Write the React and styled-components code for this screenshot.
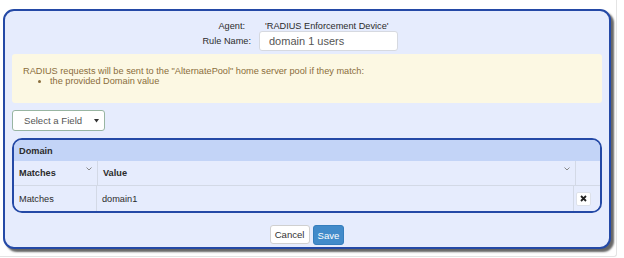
import React from "react";
import styled, { createGlobalStyle } from "styled-components";

const Global = createGlobalStyle`
  html, body { margin: 0; padding: 0; background: #fff; }
  body { font-family: "Liberation Sans", Arial, sans-serif; color: #2b2b2b; }
  * { box-sizing: border-box; }
`;

const Frame = styled.div`
  width: 617px;
  height: 257px;
  border-right: 1px solid #e4e4e4;
  border-bottom: 1px solid #e4e4e4;
  border-bottom-right-radius: 3px;
  padding: 9px 0 0 3px;
`;

const Panel = styled.div`
  width: 608px;
  height: 240px;
  border: 2px solid #2449a6;
  border-radius: 11px;
  background: #e6ecfd;
  box-shadow: 3px 3px 2px rgba(0, 0, 0, 0.6);
  padding: 9px 7px 0 7px;
  display: flex;
  flex-direction: column;
`;

const InfoRow = styled.div`
  display: flex;
  align-items: center;
  height: ${(p) => p.$h}px;
  font-size: 9.2px;
`;

const Label = styled.div`
  width: 239px;
  text-align: right;
  padding-right: ${(p) => p.$pr || 0}px;
`;

const Value = styled.div`
  margin-left: ${(p) => p.$ml}px;
`;

const TextInput = styled.div`
  width: 139px;
  height: 20px;
  background: #fff;
  border: 1px solid #d6d9e0;
  border-radius: 3px;
  font-size: 11px;
  color: #555;
  padding-left: 9px;
  display: flex;
  align-items: center;
`;

const Alert = styled.div`
  margin-top: 3px;
  background: #fcf8e3;
  border-radius: 3px;
  color: #8a6d3b;
  font-size: 9.2px;
  line-height: 10px;
  padding: 12px 11px 17px 11px;
  height: 49px;
`;

const List = styled.ul`
  margin: 0;
  padding-left: 27px;
  list-style: disc;
`;

const SelectButton = styled.div`
  margin-top: 7px;
  width: 93px;
  height: 21px;
  background: #fff;
  border: 1px solid #98b5a2;
  border-radius: 3px;
  font-size: 9.6px;
  color: #555;
  display: flex;
  align-items: center;
  justify-content: space-between;
  padding: 0 5px 0 11px;
`;

const Table = styled.div`
  margin-top: 7px;
  width: 590px;
  border: 2px solid #2449a6;
  border-radius: 10px;
  overflow: hidden;
  font-size: 9.2px;
`;

const TableTitle = styled.div`
  height: 21px;
  background: #c3d4f7;
  font-weight: bold;
  padding-left: 5px;
  display: flex;
  align-items: center;
`;

const Row = styled.div`
  display: grid;
  grid-template-columns: ${(p) => p.$cols};
  height: ${(p) => p.$h}px;
  border-top: ${(p) => (p.$sep ? "1px solid #d3d9e6" : "none")};
  background: #e6ecfd;
`;

const Cell = styled.div`
  display: flex;
  align-items: ${(p) => (p.$top ? "flex-start" : "center")};
  justify-content: space-between;
  padding-left: 5px;
  font-weight: ${(p) => (p.$bold ? "bold" : "normal")};
  border-left: ${(p) => (p.$line ? "1px solid #d3d9e6" : "none")};
`;

const HeadText = styled.span`
  align-self: center;
`;

const Chevron = styled.svg`
  align-self: flex-start;
  margin-top: 6px;
  margin-right: 5px;
`;

const DelButton = styled.div`
  width: 15px;
  height: 14px;
  margin-left: -3px;
  background: #fff;
  border: 1px solid #dde1ea;
  border-radius: 2px;
  display: flex;
  align-items: center;
  justify-content: center;
`;

const Actions = styled.div`
  margin-top: 12px;
  display: flex;
  justify-content: center;
  gap: 3px;
  font-size: 9.6px;
`;

const Button = styled.div`
  height: ${(p) => (p.$primary ? 20 : 19)}px;
  padding: 0 4px;
  border-radius: 3px;
  border: 1px solid ${(p) => (p.$primary ? "#357ebd" : "#d0d0d0")};
  background: ${(p) => (p.$primary ? "#428bca" : "#fff")};
  color: ${(p) => (p.$primary ? "#fff" : "#333")};
  display: flex;
  align-items: center;
`;

const ChevronIcon = () => (
  <Chevron width="6" height="4" viewBox="0 0 6 4">
    <polyline points="0.5,0.5 3,3 5.5,0.5" fill="none" stroke="#888" strokeWidth="1" />
  </Chevron>
);

export default function App() {
  return (
    <>
      <Global />
      <Frame>
        <Panel>
          <InfoRow $h={11}>
            <Label $pr={6}>Agent:</Label>
            <Value $ml={14}>'RADIUS Enforcement Device'</Value>
          </InfoRow>
          <InfoRow $h={20}>
            <Label>Rule Name:</Label>
            <Value $ml={8}>
              <TextInput>domain 1 users</TextInput>
            </Value>
          </InfoRow>
          <Alert>
            RADIUS requests will be sent to the "AlternatePool" home server pool if they match:
            <List>
              <li>the provided Domain value</li>
            </List>
          </Alert>
          <SelectButton>
            <span>Select a Field</span>
            <svg width="5" height="4" viewBox="0 0 5 4">
              <polygon points="0,0 5,0 2.5,3.5" fill="#333" />
            </svg>
          </SelectButton>
          <Table>
            <TableTitle>Domain</TableTitle>
            <Row $cols="83px 478px 25px" $h={24}>
              <Cell $bold $top>
                <HeadText>Matches</HeadText>
                <ChevronIcon />
              </Cell>
              <Cell $bold $top $line>
                <HeadText>Value</HeadText>
                <ChevronIcon />
              </Cell>
              <Cell $line />
            </Row>
            <Row $cols="82px 477px 27px" $h={26} $sep>
              <Cell>Matches</Cell>
              <Cell $line>domain1</Cell>
              <Cell $line>
                <DelButton>
                  <svg width="7" height="7" viewBox="0 0 7 7">
                    <path d="M1,1 L6,6 M6,1 L1,6" stroke="#222" strokeWidth="1.8" />
                  </svg>
                </DelButton>
              </Cell>
            </Row>
          </Table>
          <Actions>
            <Button>Cancel</Button>
            <Button $primary>Save</Button>
          </Actions>
        </Panel>
      </Frame>
    </>
  );
}
